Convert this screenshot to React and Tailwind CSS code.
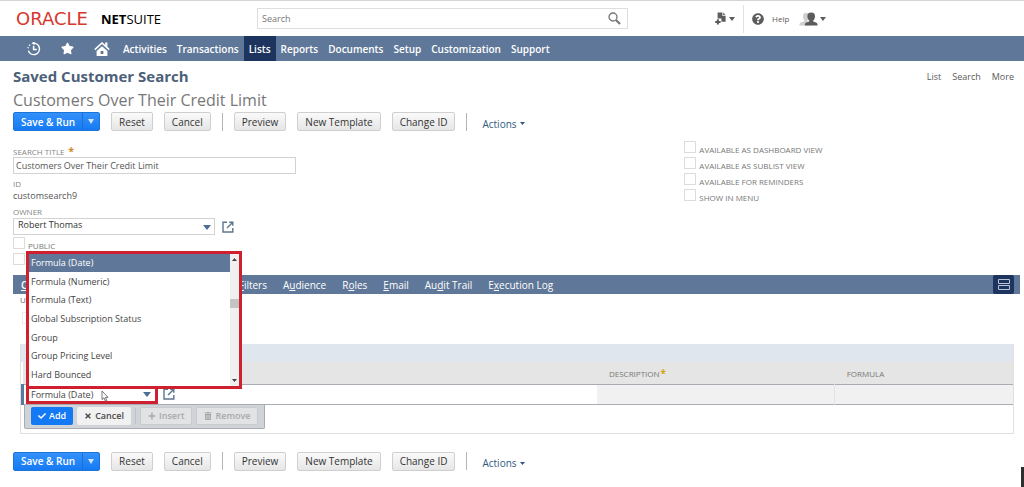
import React from "react";
import { FaCheck, FaTimes, FaPlus, FaTrashAlt, FaStar, FaQuestionCircle } from "react-icons/fa";

const NAV = ["Activities", "Transactions", "Lists", "Reports", "Documents", "Setup", "Customization", "Support"];

const TABS = [
  ["", "C", "riteria"],
  ["", "R", "esults"],
  ["", "H", "ighlighting"],
  ["Available ", "F", "ilters"],
  ["A", "u", "dience"],
  ["R", "o", "les"],
  ["", "E", "mail"],
  ["Au", "d", "it Trail"],
  ["E", "x", "ecution Log"],
];

const FIELDS = [
  "Formula (Date)",
  "Formula (Numeric)",
  "Formula (Text)",
  "Global Subscription Status",
  "Group",
  "Group Pricing Level",
  "Hard Bounced",
];

const AVAILABILITY = [
  "AVAILABLE AS DASHBOARD VIEW",
  "AVAILABLE AS SUBLIST VIEW",
  "AVAILABLE FOR REMINDERS",
  "SHOW IN MENU",
];

function Caret({ className }) {
  return (
    <svg viewBox="0 0 10 6" className={className} preserveAspectRatio="none" aria-hidden="true">
      <path d="M0 0H10L5 6Z" fill="currentColor" />
    </svg>
  );
}

function OpenIcon() {
  return (
    <svg viewBox="0 0 12 12" className="size-3 text-[#5c7590]" fill="none" stroke="currentColor" strokeWidth="1.4" aria-hidden="true">
      <path d="M5 1.2H1V11H10.8V7" />
      <path d="M7.2 1.2H10.8V4.8M10.8 1.2L5 7" />
    </svg>
  );
}

function HistoryIcon() {
  return (
    <svg viewBox="0 0 14 14" className="size-3.5" fill="none" stroke="currentColor" strokeWidth="1.5" aria-hidden="true">
      <path d="M6.6 1.2A5.7 5.7 0 1 1 1.4 8.8" />
      <path d="M6.6 3.8V7.6H9.8" />
      <path d="M7.6 -0.6V3L4.4 1.3Z" fill="currentColor" stroke="none" />
      <path d="M1 6.2L1.3 5.2M2.2 3.6L3 2.8" />
    </svg>
  );
}

function HomeIcon() {
  return (
    <svg viewBox="0 0 16 14" className="h-3.5 w-4" aria-hidden="true">
      <path d="M8 4.2L13.4 9V14H2.6V9Z" fill="currentColor" />
      <path d="M6.6 9H9.4V12H6.6Z" fill="#5f7899" />
      <path d="M0.8 7.6L8 1L15.2 7.6" fill="none" stroke="currentColor" strokeWidth="1.6" />
      <path d="M11.2 0.6H13.4V5L11.2 3.2Z" fill="currentColor" />
    </svg>
  );
}

function CreateNewIcon() {
  return (
    <svg viewBox="0 0 12 13" className="h-[13px] w-3" aria-hidden="true">
      <path d="M2.6 0.5H7.4V4H10.6V9.8H6.4V6.6H2.6Z" fill="currentColor" />
      <path d="M8.2 0.5L10.6 3.2H8.2Z" fill="currentColor" />
      <path d="M2.9 7.2V12.6M0.2 9.9H5.6" stroke="currentColor" strokeWidth="2" />
    </svg>
  );
}

function PeopleIcon() {
  return (
    <svg viewBox="0 0 19 14" className="h-3.5 w-[19px]" aria-hidden="true">
      <path
        d="M7 0.8C9.2 0.8 10.2 2.4 10 4.6C9.9 6.4 9.2 7.6 8.4 8.2V9.4L12 11V13.4H0.4C0.4 11.4 0.8 10.8 2 10.4L5.4 9.2V8.2C4.6 7.6 4.1 6.4 4 4.6C3.9 2.4 4.9 0.8 7 0.8Z"
        fill="#cfcfcf"
      />
      <path
        d="M12.2 0.4C15 0.4 16.1 2 16 4.4C15.9 6.6 15 7.8 14.2 8.6V9.6L17 10.6C18.2 11 18.6 11.8 18.6 13.6H5.8C5.8 11.8 6.2 11 7.4 10.6L10.2 9.6V8.6C9.4 7.8 8.5 6.6 8.4 4.4C8.3 2 9.4 0.4 12.2 0.4Z"
        fill="currentColor"
      />
    </svg>
  );
}

function GrayButton({ children }) {
  return (
    <button
      type="button"
      className="h-[19px] rounded-xs border border-[#cfcfcf] bg-linear-to-b from-[#fafafa] to-[#e6e6e6] px-[7px] text-[10px] leading-4 font-medium whitespace-nowrap text-[#333]"
    >
      {children}
    </button>
  );
}

function Toolbar() {
  return (
    <div className="flex items-center gap-[11px]">
      <div className="flex h-[19px] rounded-xs border border-[#1d74d8] bg-linear-to-b from-[#3391fb] to-[#147af3] text-white">
        <button type="button" className="px-[7px] text-[10px] leading-4 font-semibold whitespace-nowrap">
          Save &amp; Run
        </button>
        <button type="button" aria-label="More save options" className="flex w-[17px] items-center justify-center border-l border-[#1d6fd0]">
          <Caret className="h-[5px] w-1.5 text-[#cfe4ff]" />
        </button>
      </div>
      <GrayButton>Reset</GrayButton>
      <GrayButton>Cancel</GrayButton>
      <span className="h-[18px] w-px bg-[#b5b5b5]" />
      <GrayButton>Preview</GrayButton>
      <GrayButton>New Template</GrayButton>
      <GrayButton>Change ID</GrayButton>
      <span className="h-[18px] w-px bg-[#b5b5b5]" />
      <button type="button" className="flex items-center gap-[3px] pt-1 pl-1 text-[10px] leading-[14px] font-medium text-[#2f5a80]">
        Actions
        <Caret className="h-[3px] w-[5px]" />
      </button>
    </div>
  );
}

function Check({ id, label }) {
  return (
    <div className="flex h-4 items-start gap-[3px]">
      <input id={id} type="checkbox" aria-label={label ? undefined : "Inactive"} className="size-3 shrink-0 appearance-none border border-[#dcdcdc] bg-white" />
      {label && (
        <label htmlFor={id} className="pt-[3px] text-[8px] leading-3 whitespace-nowrap text-[#777]">
          {label}
        </label>
      )}
    </div>
  );
}

function TrayButton({ icon, children, primary, disabled }) {
  const look = primary
    ? "bg-[#1479f4] text-white"
    : disabled
      ? "border border-[#c9cbce] bg-[#e2e3e5] text-[#a9a9a9]"
      : "bg-[#f1f1f2] text-[#4a4a4a]";
  return (
    <button
      type="button"
      disabled={disabled}
      className={`flex h-[18px] items-center justify-center gap-[3px] rounded-xs px-[7px] text-[9px] leading-4 font-semibold ${look}`}
    >
      {icon}
      {children}
    </button>
  );
}

function FieldPicker() {
  return (
    <div className="relative z-10 w-[132px]">
      <div className="relative border-[3px] border-[#cf2030] bg-white">
        <select
          aria-label="Filter"
          defaultValue="Formula (Date)"
          className="block h-[13px] w-full appearance-none bg-transparent px-0.5 text-[9px] leading-[13px] text-[#444]"
        >
          {FIELDS.map((f) => (
            <option key={f}>{f}</option>
          ))}
        </select>
        <Caret className="pointer-events-none absolute top-1 right-1 h-[5px] w-2 text-[#4d6d93]" />
        <svg viewBox="0 0 8 12" className="pointer-events-none absolute top-0.5 left-[72px] h-3 w-2" aria-hidden="true">
          <path d="M1 1V9.6L3 7.8L4.4 11.2L5.8 10.6L4.4 7.4H7Z" fill="#fff" stroke="#555" strokeWidth="0.8" />
        </svg>
      </div>
      <div className="absolute bottom-[15px] left-0 flex h-[138px] w-[216px] border-[3px] border-[#cf2030] bg-white">
        <ul role="listbox" aria-label="Filter fields" className="flex flex-1 flex-col pb-px">
          {FIELDS.map((f, i) => (
            <li
              key={f}
              role="option"
              aria-selected={i === 0}
              className={`flex flex-1 items-center px-0.5 text-[9px] leading-3 whitespace-nowrap ${i === 0 ? "bg-[#5f7899] text-white" : "text-[#444]"}`}
            >
              {f}
            </li>
          ))}
        </ul>
        <div className="flex w-[9px] flex-col items-center bg-[#f0f0f1] py-1 text-[#444]">
          <Caret className="h-[3px] w-[5px] rotate-180" />
          <span className="mt-[38px] mb-auto h-[9px] w-full bg-[#c4c4c5]" />
          <Caret className="h-[3px] w-[5px]" />
        </div>
      </div>
    </div>
  );
}

export default function App() {
  return (
    <div className="min-h-screen bg-white font-['Open_Sans','Noto_Sans',sans-serif] text-[#444]">
      <header className="flex h-9 items-center border-t border-[#d4d4d4] pl-4">
        <a href="#home" className="flex w-[241px] items-center">
          <span className="w-[85px] font-['DejaVu_Sans',sans-serif] text-[18px] leading-5 text-[#d8372f]">ORACLE</span>
          <span className="text-[13px] leading-5 text-black">
            <b>NET</b>SUITE
          </span>
        </a>
        <div className="flex h-[21px] w-[371px] items-center border border-[#dedede] pr-1.5 pl-1">
          <input type="search" aria-label="Search" placeholder="Search" className="min-w-0 flex-1 text-[9px] leading-4 outline-none placeholder:text-[#777]" />
          <svg viewBox="0 0 13 13" className="size-[13px] text-[#757575]" fill="none" stroke="currentColor" aria-hidden="true">
            <circle cx="5" cy="5" r="4" strokeWidth="1.3" />
            <path d="M8 8L12 12" strokeWidth="2.2" />
          </svg>
        </div>
        <div className="flex h-7 items-center pl-[87px] text-[#5c5c5c]">
          <button type="button" aria-label="Create new" className="flex items-center gap-0.5">
            <CreateNewIcon />
            <Caret className="h-1 w-1.5" />
          </button>
          <span className="ml-2 h-7 w-px bg-[#e2e2e2]" />
          <a href="#help" className="ml-2 flex items-center gap-2 text-[8px] leading-4">
            <FaQuestionCircle className="size-3" />
            Help
          </a>
          <button type="button" aria-label="Change role" className="ml-2.5 flex items-center gap-0.5">
            <PeopleIcon />
            <Caret className="h-1 w-1.5" />
          </button>
        </div>
      </header>

      <nav className="flex h-[25px] items-stretch bg-[#5f7899] pl-[27px] text-white">
        <div className="flex items-center gap-5 pr-2">
          <a href="#recent" aria-label="Recent records"><HistoryIcon /></a>
          <a href="#shortcuts" aria-label="Shortcuts"><FaStar className="size-[13px]" /></a>
          <a href="#home" aria-label="Home"><HomeIcon /></a>
        </div>
        {NAV.map((n) => (
          <a
            key={n}
            href="#nav"
            className={`flex items-center px-[5px] text-[10px] leading-4 font-semibold whitespace-nowrap ${n === "Lists" ? "bg-[#1d355e]" : ""}`}
          >
            {n}
          </a>
        ))}
      </nav>

      <main className="pr-1 pl-[13px]">
        <div className="flex items-start justify-between pt-1">
          <h1 className="text-[15px] leading-[22px] font-bold text-[#4d5f79]">Saved Customer Search</h1>
          <div className="flex gap-[11px] pt-1 pr-1.5 text-[9px] leading-4 text-[#5a5a5a]">
            <a href="#list">List</a>
            <a href="#search">Search</a>
            <a href="#more">More</a>
          </div>
        </div>
        <h2 className="pt-0.5 pb-px text-[16px] leading-[22px] text-[#777]">Customers Over Their Credit Limit</h2>
        <Toolbar />

        <div className="grid grid-cols-[2fr_1fr] pt-3.5">
          <div>
            <label htmlFor="title" className="block h-3 text-[8px] leading-3 text-[#858585]">
              SEARCH TITLE <span className="pl-0.5 text-[10px] font-bold text-[#d08a28]">*</span>
            </label>
            <input
              id="title"
              defaultValue="Customers Over Their Credit Limit"
              className="block h-[17px] w-[283px] border border-[#d2d2d2] px-0.5 text-[9px] leading-[14px] text-[#555]"
            />
            <div className="pt-1 text-[8px] leading-3 text-[#858585]">ID</div>
            <div className="text-[9px] leading-3 text-[#555]">customsearch9</div>
            <label htmlFor="owner" className="block pt-1 text-[8px] leading-3 text-[#858585]">OWNER</label>
            <div className="flex items-center gap-[7px]">
              <div className="relative w-[202px]">
                <select id="owner" className="block h-[17px] w-full appearance-none border border-[#d2d2d2] bg-white px-1 pb-1 text-[9px] leading-3 text-[#333]">
                  <option>Robert Thomas</option>
                </select>
                <Caret className="pointer-events-none absolute top-[7px] right-1 h-[5px] w-2 text-[#4d6d93]" />
              </div>
              <a href="#owner" aria-label="Open owner"><OpenIcon /></a>
            </div>
            <div className="pt-0.5">
              <Check id="public" label="PUBLIC" />
              <Check id="inactive" />
            </div>
          </div>
          <div className="-mt-1">
            {AVAILABILITY.map((a, i) => (
              <Check key={a} id={`avail-${i}`} label={a} />
            ))}
          </div>
        </div>

        <div className="mt-1.5 flex h-[19px] items-center bg-[#5f7899] pr-1.5 pl-2 text-[10px] leading-4 text-white">
          <div role="tablist" className="flex flex-1 gap-4">
            {TABS.map(([pre, key, post], i) => (
              <button key={key + post} role="tab" type="button" aria-selected={i === 0} className={`whitespace-nowrap ${i === 0 ? "font-semibold" : ""}`}>
                {pre}
                <u>{key}</u>
                {post}
              </button>
            ))}
          </div>
          <button type="button" aria-label="Toggle layout" className="flex h-[19px] w-[21px] items-center justify-center rounded-xs bg-[#1d355e]">
            <svg viewBox="0 0 12 11" className="h-[11px] w-3" fill="none" stroke="#b9c4d6" aria-hidden="true">
              <path d="M0.5 0.5H11.5V4.5H0.5ZM0.5 6.5H11.5V10.5H0.5Z" />
            </svg>
          </button>
        </div>

        <div className="pl-[7px]">
          <label htmlFor="expr" className="block text-[8px] leading-3 text-[#666]">USE EXPRESSIONS</label>
          <input id="expr" type="checkbox" className="mt-1.5 ml-0.5 block size-3 appearance-none border border-[#ececec]" />
        </div>

        <section className="mt-5 mr-1.5 ml-[7px] border border-t-0 border-[#e0e0e2] pb-1">
          <div className="h-[18px] bg-[#dfe6ee]" />
          <table className="w-full table-fixed border-collapse text-left">
            <thead>
              <tr className="h-[22px] border-b border-[#a9adb3] bg-[#e5e5e5] text-[8px] leading-3 text-[#777]">
                <th className="w-[58%] font-normal"><span className="sr-only">Filter</span></th>
                <th className="w-[24%] pt-0.5 pl-3 font-normal">
                  DESCRIPTION<span className="pl-px text-[10px] font-bold text-[#d9a520]">*</span>
                </th>
                <th className="w-[18%] pt-0.5 pl-3 font-normal">FORMULA</th>
              </tr>
            </thead>
            <tbody>
              <tr className="h-5 border-b border-[#a9adb3]">
                <td className="border-l-[3px] border-[#587a9c] p-0">
                  <div className="flex h-[19px] items-center gap-[5px] pl-0.5">
                    <FieldPicker />
                    <a href="#field" aria-label="Open field"><OpenIcon /></a>
                  </div>
                </td>
                <td className="border-r border-[#e2e2e2] bg-[#f1f1f1]" />
                <td className="bg-[#f1f1f1]" />
              </tr>
            </tbody>
          </table>
          <div className="ml-[3px] flex h-6 w-fit items-center gap-1 rounded-b-xs border border-t-0 border-[#a9acb2] bg-[#d0d3d8] px-1.5">
            <TrayButton primary icon={<FaCheck className="size-2" />}>Add</TrayButton>
            <TrayButton icon={<FaTimes className="size-2" />}>Cancel</TrayButton>
            <span className="h-4 w-px bg-[#bfc2c7]" />
            <TrayButton disabled icon={<FaPlus className="size-2" />}>Insert</TrayButton>
            <TrayButton disabled icon={<FaTrashAlt className="size-2" />}>Remove</TrayButton>
          </div>
        </section>

        <div className="pt-[18px]">
          <Toolbar />
        </div>
      </main>
      <div className="fixed right-0 bottom-0 h-5 w-[3px] bg-[#2e2e2e]" />
    </div>
  );
}
